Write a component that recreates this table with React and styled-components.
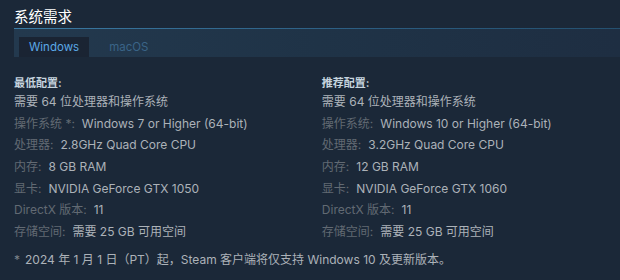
import React from "react";
import styled, { createGlobalStyle } from "styled-components";

const Global = createGlobalStyle`
  html, body { margin: 0; padding: 0; background: #1b2838; }
  body { font-family: Inter, "Noto Sans CJK SC", sans-serif; }
`;

const Page = styled.div`
  width: 620px;
  height: 280px;
  box-sizing: border-box;
  padding: 8px 14px 0 14px;
  background: #1b2838;
  overflow: hidden;
`;

const Title = styled.h2`
  margin: 0;
  font-size: 14.5px;
  line-height: 18px;
  font-weight: normal;
  color: #ffffff;
  height: 20px;
`;

const TabBar = styled.div`
  margin-right: -14px;
  height: 28px;
  border-top: 1px solid #2f6a90;
  border-image: linear-gradient(90deg, #3b7aa3 0%, #2b5c80 60%, #24506f 100%) 1;
  border-left: 0;
  border-right: 0;
  border-bottom: 0;
  background: linear-gradient(90deg, #23394e 0%, #1f3347 50%, #1e2e42 100%);
  display: flex;
  align-items: flex-end;
  padding-left: 5px;
`;

const Tab = styled.div`
  height: 20px;
  box-sizing: border-box;
  padding: 0 10px;
  font-size: 11.5px;
  line-height: 20px;
  color: ${(p) => (p.$active ? "#5aa9e6" : "#3a6487")};
  background: ${(p) => (p.$active ? "#1a2433" : "transparent")};
  margin-right: ${(p) => (p.$active ? "10px" : "0")};
`;

const Columns = styled.div`
  display: flex;
  justify-content: space-between;
  margin-top: 19px;
`;

const Col = styled.div`
  width: 48%;
`;

const Header = styled.div`
  font-size: 11px;
  font-weight: bold;
  line-height: 14px;
  color: #c6d4df;
  margin-bottom: 1px;
`;

const List = styled.ul`
  list-style: none;
  margin: 0;
  padding: 0;
`;

const Row = styled.li`
  font-size: 12px;
  line-height: 21.67px;
  color: #acb2b8;
  white-space: nowrap;
`;

const Label = styled.span`
  color: #626a73;
  margin-right: 7px;
`;

const Note = styled.div`
  margin-top: 8px;
  font-size: 12px;
  line-height: 18px;
  color: #acb2b8;
`;

const Star = styled.span`
  color: #7d858c;
  margin-right: 5px;
`;

const minReq = [
  [null, "需要 64 位处理器和操作系统"],
  ["操作系统 *:", "Windows 7 or Higher (64-bit)"],
  ["处理器:", "2.8GHz Quad Core CPU"],
  ["内存:", "8 GB RAM"],
  ["显卡:", "NVIDIA GeForce GTX 1050"],
  ["DirectX 版本:", "11"],
  ["存储空间:", "需要 25 GB 可用空间"],
];

const recReq = [
  [null, "需要 64 位处理器和操作系统"],
  ["操作系统:", "Windows 10 or Higher (64-bit)"],
  ["处理器:", "3.2GHz Quad Core CPU"],
  ["内存:", "12 GB RAM"],
  ["显卡:", "NVIDIA GeForce GTX 1060"],
  ["DirectX 版本:", "11"],
  ["存储空间:", "需要 25 GB 可用空间"],
];

function ReqColumn({ title, rows }) {
  return (
    <Col>
      <Header>{title}</Header>
      <List>
        {rows.map(([label, value], i) => (
          <Row key={i}>
            {label && <Label>{label}</Label>}
            {value}
          </Row>
        ))}
      </List>
    </Col>
  );
}

export default function App() {
  return (
    <>
      <Global />
      <Page>
        <Title>系统需求</Title>
        <TabBar>
          <Tab $active>Windows</Tab>
          <Tab>macOS</Tab>
        </TabBar>
        <Columns>
          <ReqColumn title="最低配置:" rows={minReq} />
          <ReqColumn title="推荐配置:" rows={recReq} />
        </Columns>
        <Note>
          <Star>*</Star>2024 年 1 月 1 日（PT）起，Steam 客户端将仅支持 Windows 10 及更新版本。
        </Note>
      </Page>
    </>
  );
}
